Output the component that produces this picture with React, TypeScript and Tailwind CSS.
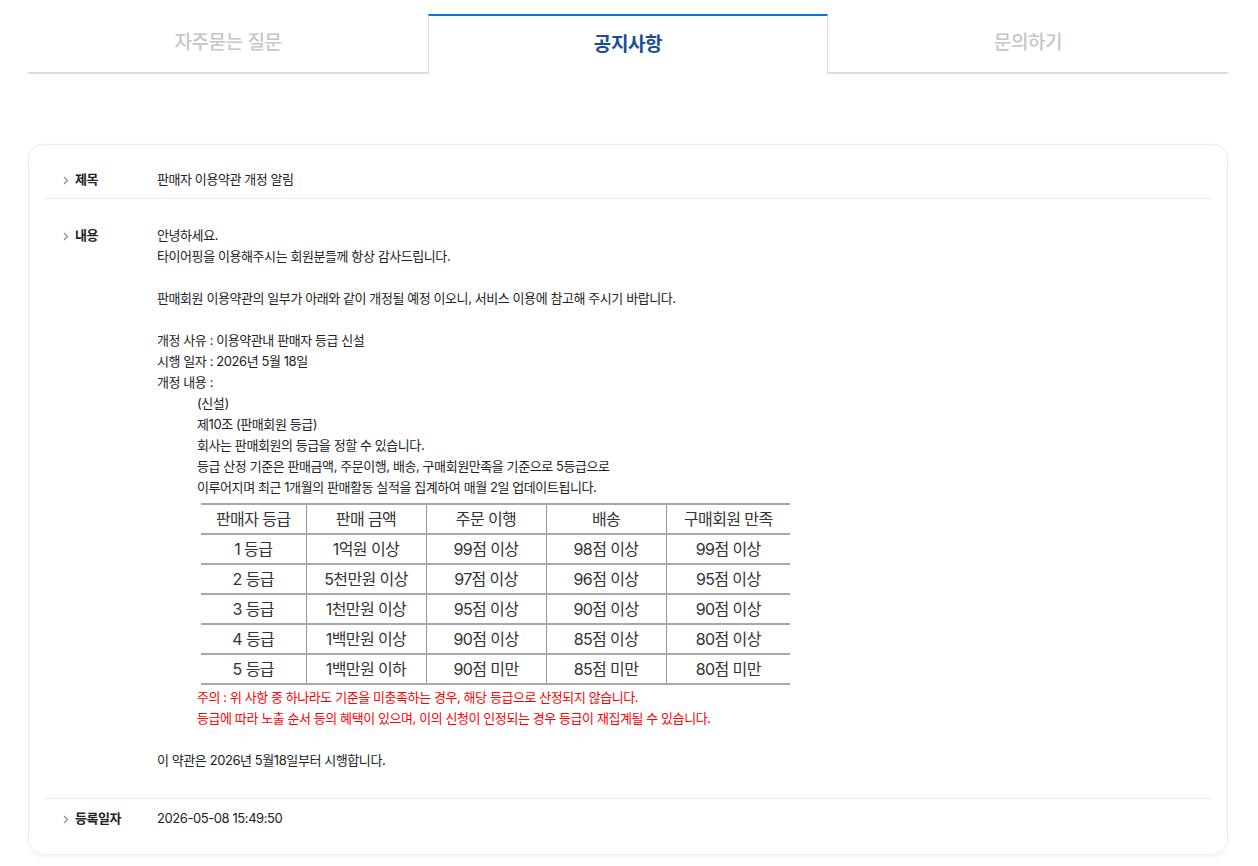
import React from "react";

const font = { fontFamily: 'Inter, "Noto Sans CJK KR", sans-serif' };

function Chevron() {
  return (
    <svg width="6" height="9" viewBox="0 0 6 9" className="mr-[6px] mt-[1px] shrink-0">
      <path d="M1 1l3.5 3.5L1 8" fill="none" stroke="#888" strokeWidth="1.1" />
    </svg>
  );
}

function Label({ children }: { children: React.ReactNode }) {
  return (
    <div className="w-[113px] shrink-0 flex items-center pl-[19px] h-[21px] font-bold text-[13px] text-[#222]">
      <Chevron />
      {children}
    </div>
  );
}

const rows = [
  ["1 등급", "1억원 이상", "99점 이상", "98점 이상", "99점 이상"],
  ["2 등급", "5천만원 이상", "97점 이상", "96점 이상", "95점 이상"],
  ["3 등급", "1천만원 이상", "95점 이상", "90점 이상", "90점 이상"],
  ["4 등급", "1백만원 이상", "90점 이상", "85점 이상", "80점 이상"],
  ["5 등급", "1백만원 이하", "90점 미만", "85점 미만", "80점 미만"],
];
const heads = ["판매자 등급", "판매 금액", "주문 이행", "배송", "구매회원 만족"];
const widths = ["w-[105px]", "w-[120px]", "w-[120px]", "w-[120px]", "w-[124px]"];

export default function App() {
  return (
    <div className="bg-white min-h-[866px] w-[1258px] pt-[14px]" style={font}>
      <div className="mx-[28px] w-[1200px] flex h-[60px] tracking-[-0.4px]">
        <div className="w-[400px] border-b-2 border-[#dddddd] flex items-center justify-center text-[19px] text-[#c6c6c6] font-medium">
          자주묻는 질문
        </div>
        <div className="w-[400px] border-t-2 border-t-[#0a73dc] border-x border-x-[#dddddd] flex items-center justify-center text-[19px] text-[#1a4d97] font-bold">
          공지사항
        </div>
        <div className="w-[400px] border-b-2 border-[#dddddd] flex items-center justify-center text-[19px] text-[#c6c6c6] font-medium">
          문의하기
        </div>
      </div>

      <div className="mx-[28px] mt-[70px] w-[1200px] rounded-[16px] border border-[#ececec] shadow-[0_2px_6px_rgba(0,0,0,0.05)] px-[15px] text-[13px] text-[#222] leading-[21px] tracking-[-0.42px]">
        <div className="flex pt-[24px] pb-[8px] border-b border-[#ececec]">
          <Label>제목</Label>
          <div>판매자 이용약관 개정 알림</div>
        </div>

        <div className="flex pt-[26px] pb-[27px] border-b border-[#ececec]">
          <Label>내용</Label>
          <div className="flex-1">
            <div>안녕하세요.</div>
            <div>타이어핑을 이용해주시는 회원분들께 항상 감사드립니다.</div>
            <div className="h-[21px]" />
            <div>판매회원 이용약관의 일부가 아래와 같이 개정될 예정 이오니, 서비스 이용에 참고해 주시기 바랍니다.</div>
            <div className="h-[21px]" />
            <div>개정 사유 : 이용약관내 판매자 등급 신설</div>
            <div>시행 일자 : 2026년 5월 18일</div>
            <div>개정 내용 :</div>
            <div className="pl-[40px]">
              <div>(신설)</div>
              <div>제10조 (판매회원 등급)</div>
              <div>회사는 판매회원의 등급을 정할 수 있습니다.</div>
              <div>등급 산정 기준은 판매금액, 주문이행, 배송, 구매회원만족을 기준으로 5등급으로</div>
              <div>이루어지며 최근 1개월의 판매활동 실적을 집계하여 매월 2일 업데이트됩니다.</div>
              <table className="ml-[4px] mt-[5px] border-collapse text-[16px] text-[#333] leading-none tracking-[-0.6px]">
                <thead>
                  <tr className="h-[30px] border-t-2 border-b-2 border-[#a8a8a8]">
                    {heads.map((h, i) => (
                      <th
                        key={h}
                        className={`${widths[i]} font-normal text-center ${i > 0 ? "border-l border-[#999999]" : ""}`}
                      >
                        {h}
                      </th>
                    ))}
                  </tr>
                </thead>
                <tbody>
                  {rows.map((r, ri) => (
                    <tr key={ri} className="h-[30px] border-b-2 border-[#a8a8a8]">
                      {r.map((c, i) => (
                        <td key={i} className={`text-center ${i > 0 ? "border-l border-[#999999]" : ""}`}>
                          {c}
                        </td>
                      ))}
                    </tr>
                  ))}
                </tbody>
              </table>
              <div className="text-[#ff0000] mt-[2px]">
                <div>주의 : 위 사항 중 하나라도 기준을 미충족하는 경우, 해당 등급으로 산정되지 않습니다.</div>
                <div>등급에 따라 노출 순서 등의 혜택이 있으며, 이의 신청이 인정되는 경우 등급이 재집계될 수 있습니다.</div>
              </div>
            </div>
            <div className="h-[21px]" />
            <div>이 약관은 2026년 5월18일부터 시행합니다.</div>
          </div>
        </div>

        <div className="flex pt-[9px] pb-[25px]">
          <Label>등록일자</Label>
          <div>2026-05-08 15:49:50</div>
        </div>
      </div>
    </div>
  );
}
